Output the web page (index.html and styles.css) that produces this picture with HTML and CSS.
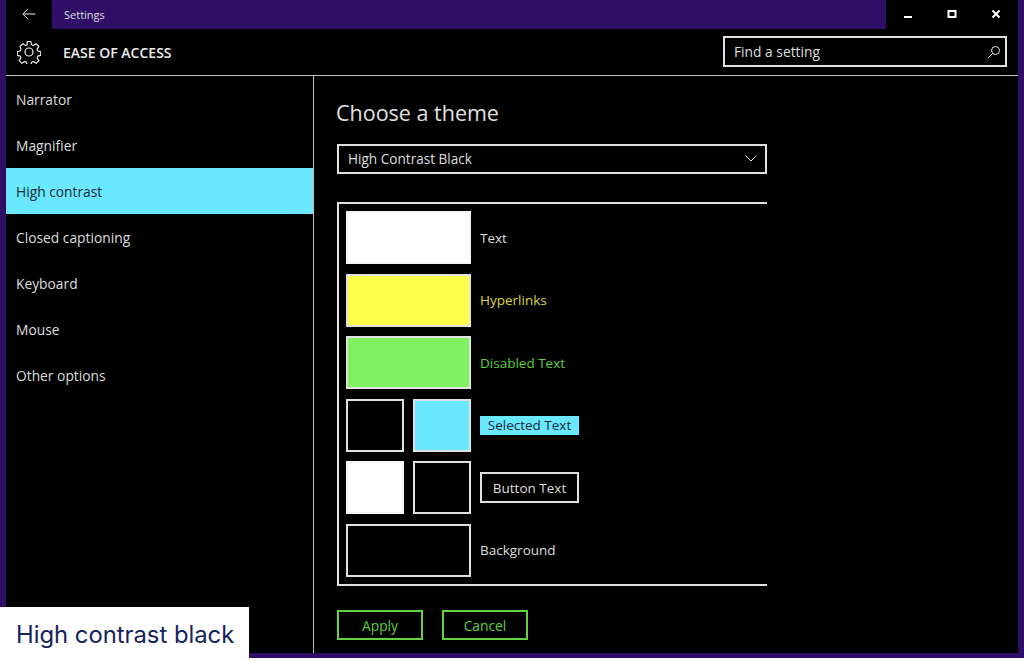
FILE: index.html
```html
<!DOCTYPE html>
<html lang="en">
<head>
<meta charset="utf-8">
<title>Settings</title>
<link rel="stylesheet" href="styles.css">
</head>
<body>
<div class="window">
  <div class="titlebar">
    <div class="back">
      <svg width="14" height="12" viewBox="0 0 14 12" fill="none" stroke="#e8e8e8" stroke-width="1"><path d="M13.5 6H1M6 .8 .9 6 6 11.2"/></svg>
    </div>
    <div class="title">Settings</div>
    <div class="controls">
      <svg class="ctl" width="10" height="10" viewBox="0 0 10 10"><rect x="1" y="7" width="8" height="2" fill="#fff"/></svg>
      <svg class="ctl" width="10" height="10" viewBox="0 0 10 10" fill="none" stroke="#fff" stroke-width="2"><rect x="1.500" y="2" width="7" height="6"/></svg>
      <svg class="ctl" width="10" height="10" viewBox="0 0 10 10" fill="none" stroke="#fff" stroke-width="1.800"><path d="M1.500 1.500 8.500 8.500M8.500 1.500 1.500 8.500"/></svg>
    </div>
  </div>
  <header class="header">
    <svg class="gear" width="24" height="24" viewBox="0 0 24 24" fill="none" stroke="#f0f0f0" stroke-width="1.200" stroke-linejoin="round"><circle cx="12" cy="12" r="4"/><path d="M10 1h4l.7 3.300 1.900.8 2.900-1.800 2.800 2.800-1.800 2.900.8 1.900 3 .7v4l-3 .7-.8 1.900 1.800 2.900-2.800 2.800-2.900-1.800-1.900.8-.7 2.800h-4l-.7-2.800-1.900-.8-2.900 1.800-2.800-2.800 1.800-2.900-.8-1.900-3-.7v-4l3-.7.8-1.900L2.600 6.100l2.800-2.800 2.900 1.800 1.900-.8z" transform="translate(.6 .6) scale(.95)"/></svg>
    <h1 class="section">EASE OF ACCESS</h1>
    <div class="search">
      <span>Find a setting</span>
      <svg width="14" height="14" viewBox="0 0 14 14" fill="none" stroke="#e8e8e8" stroke-width="1"><circle cx="8.500" cy="5.500" r="4"/><path d="M5.700 8.300 1 13"/></svg>
    </div>
  </header>
  <div class="body">
    <nav class="sidebar">
      <div class="item">Narrator</div>
      <div class="item">Magnifier</div>
      <div class="item active">High contrast</div>
      <div class="item">Closed captioning</div>
      <div class="item">Keyboard</div>
      <div class="item">Mouse</div>
      <div class="item">Other options</div>
    </nav>
    <main class="content">
      <h2 class="heading">Choose a theme</h2>
      <div class="select">
        <span>High Contrast Black</span>
        <svg width="12" height="7" viewBox="0 0 12 7" fill="none" stroke="#e8e8e8" stroke-width="1"><path d="M.5.5 6 6 11.500.5"/></svg>
      </div>
      <div class="panel">
        <div class="row">
          <div class="swatch wide white"></div>
          <span class="label">Text</span>
        </div>
        <div class="row">
          <div class="swatch wide yellow"></div>
          <span class="label link">Hyperlinks</span>
        </div>
        <div class="row">
          <div class="swatch wide green"></div>
          <span class="label disabled">Disabled Text</span>
        </div>
        <div class="row">
          <div class="swatch"></div>
          <div class="swatch cyan"></div>
          <span class="chip selected">Selected Text</span>
        </div>
        <div class="row">
          <div class="swatch white"></div>
          <div class="swatch"></div>
          <span class="chip outlined">Button Text</span>
        </div>
        <div class="row">
          <div class="swatch wide"></div>
          <span class="label">Background</span>
        </div>
      </div>
      <div class="actions">
        <div class="btn">Apply</div>
        <div class="btn">Cancel</div>
      </div>
    </main>
  </div>
</div>
<div class="caption">High contrast black</div>
</body>
</html>
```
FILE: styles.css
```css
* { box-sizing: border-box; }
html, body { margin: 0; padding: 0; }
body {
  position: relative;
  width: 1024px;
  height: 661px;
  overflow: hidden;
  background: #fff;
  font-family: "Open Sans", "Noto Sans", sans-serif;
  font-size: 13.800px;
  color: #dedede;
}
.window {
  width: 1024px;
  height: 658px;
  display: flex;
  flex-direction: column;
  background: #000;
  border-left: 6px solid #2f0e68;
  border-right: 6px solid #2f0e68;
  border-bottom: 5px solid #2f0e68;
}
.titlebar { display: flex; height: 29px; flex: none; }
.back { width: 46px; display: flex; align-items: center; justify-content: center; padding-bottom: 1px; }
.title {
  flex: 1;
  background: #2f0e68;
  padding-left: 12px;
  font-size: 11px;
  line-height: 30px;
  color: #ddd;
}
.controls { width: 132px; display: flex; align-items: center; padding-left: 17px; gap: 34px; padding-bottom: 2px; }
.header {
  height: 47px;
  flex: none;
  display: flex;
  align-items: center;
  border-bottom: 1px solid #bdbdbd;
  padding-left: 11px;
  padding-right: 11px;
}
.gear { flex: none; }
.section { margin: 0 0 0 22px; font-size: 14px; font-weight: 600; color: #eee; flex: 1; }
.search {
  width: 284px;
  height: 31px;
  border: 2px solid #e0e0e0;
  margin-top: -1px;
  display: flex;
  align-items: center;
  justify-content: space-between;
  padding: 0 4px 0 9px;
}
.body { flex: 1; display: flex; min-height: 0; }
.sidebar { width: 308px; flex: none; border-right: 1px solid #bdbdbd; }
.item { height: 46px; line-height: 48px; padding-left: 10px; }
.active { background: #69e8ff; color: #1a2a30; }
.content { flex: 1; padding-left: 22px; }
.heading { margin: 23px 0 0; font-size: 21.500px; font-weight: 400; line-height: 28px; color: #e0e0e0; }
.select {
  width: 430px;
  height: 30px;
  margin: 17px 0 0 1px;
  border: 2px solid #e0e0e0;
  display: flex;
  align-items: center;
  justify-content: space-between;
  padding: 0 8px 1px 9px;
  font-size: 13.600px;
}
.panel {
  width: 430px;
  height: 384px;
  margin: 28px 0 0 1px;
  padding: 7px 0 0 7px;
  border: 2px solid #e0e0e0;
  border-right: none;
  display: flex;
  flex-direction: column;
  gap: 9.500px;
  font-size: 13.500px;
}
.row { display: flex; align-items: center; gap: 9px; height: 53px; }
.swatch { width: 58px; height: 53px; background: #000; border: 2px solid #e0e0e0; }
.wide { width: 125px; }
.white { background: #fff; border-color: #f4f4f4; }
.yellow { background: #fffc4a; }
.green { background: #7ff060; }
.cyan { background: #69e8ff; }
.link { color: #dcd830; }
.disabled { color: #5ed03a; }
.chip { width: 99px; text-align: center; }
.selected { background: #69e8ff; color: #1a2a30; height: 19px; line-height: 19px; }
.outlined { border: 2px solid #e0e0e0; height: 31px; line-height: 28px; }
.actions { display: flex; gap: 19px; margin: 24px 0 0 1px; }
.btn {
  width: 86px;
  height: 30px;
  line-height: 27px;
  border: 2px solid #62d040;
  color: #5ed03a;
  text-align: center;
}
.caption {
  position: absolute;
  left: 0;
  top: 607px;
  width: 249px;
  height: 54px;
  background: #fff;
  color: #14245c;
  font-family: "Inter", sans-serif;
  font-size: 23.800px;
  line-height: 56px;
  padding-left: 16px;
}
```
